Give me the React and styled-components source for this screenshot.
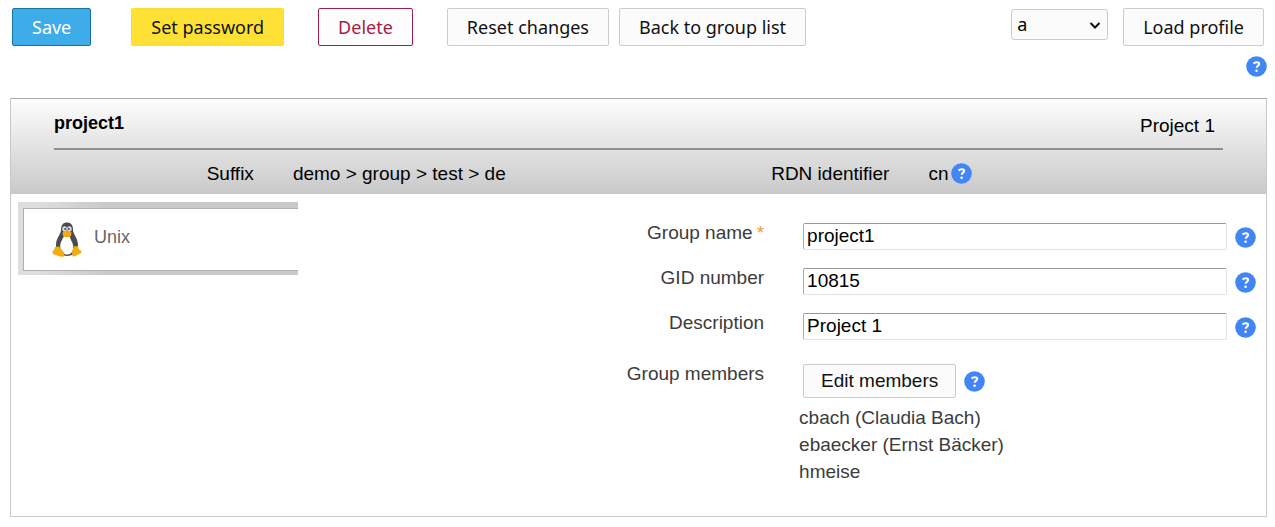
import React, {useState} from 'react'
import styled, {createGlobalStyle} from 'styled-components'

const GlobalStyle = createGlobalStyle`
  * {
    box-sizing: border-box;
  }

  body {
    margin: 0;
    background-color: #fff;
    color: #000;
    font-family: "Liberation Sans", Arial, sans-serif;
    font-size: 19px;
    line-height: 27px;
  }
`;

const Page = styled.main`
  padding: 8px 8px 10px 10px;
`;

const Toolbar = styled.div`
  display: flex;
  align-items: flex-start;
  padding: 0 3px 0 2px;
`;

const ButtonGroup = styled.div`
  display: flex;
  gap: 10px;
  margin-right: ${(props) => props.$gap || 0};
`;

const ProfileForm = styled.form`
  display: flex;
  align-items: flex-start;
  gap: 15px;
  margin-left: auto;
`;

const variants = {
  plain: {background: '#fbfbfb', border: '#ccc', color: '#111'},
  save: {background: '#3facea', border: '#16739f', color: '#fff'},
  password: {background: '#ffe135', border: '#fbdd31', color: '#111'},
  remove: {background: '#fcfcfc', border: '#9d2142', color: '#a81c43'},
};

const Button = styled.button`
  height: ${(props) => (props.$small ? '34px' : '38px')};
  padding: 0 ${(props) => (props.$small ? '17px' : '19px')};
  border: 1px solid ${(props) => variants[props.$variant || 'plain'].border};
  border-radius: 2px;
  background-color: ${(props) => variants[props.$variant || 'plain'].background};
  color: ${(props) => variants[props.$variant || 'plain'].color};
  font-family: ${(props) => (props.$small ? 'inherit' : '"Noto Sans", sans-serif')};
  font-size: ${(props) => (props.$small ? '19px' : '18px')};
  white-space: nowrap;
  cursor: pointer;
`;

const SelectWrapper = styled.div`
  position: relative;
  margin-top: 1px;

  svg {
    position: absolute;
    top: 12px;
    right: 7px;
    pointer-events: none;
  }
`;

const ProfileSelect = styled.select`
  display: block;
  width: 97px;
  height: 31px;
  padding: 0 5px 1px;
  appearance: none;
  border: 1px solid #ccc;
  border-radius: 3px;
  background-color: #fbfbfb;
  color: #000;
  font-family: "Noto Sans", sans-serif;
  font-size: 18px;
`;

const HelpRow = styled.div`
  display: flex;
  justify-content: flex-end;
  padding: 10px 0 21px;
`;

const HelpButton = styled.button`
  display: block;
  flex: none;
  width: 21px;
  height: 21px;
  padding: 0;
  border: none;
  background: none;
  cursor: pointer;

  svg {
    display: block;
  }
`;

const Panel = styled.section`
  border: 1px solid #c8c8c8;
  border-top-color: #aaa;
`;

const PanelHeader = styled.header`
  padding: 11px 43px 7px;
  background: linear-gradient(#fdfdfd, #c9c9c9);
`;

const TitleRow = styled.div`
  display: flex;
  justify-content: space-between;
  padding: 0 8px 11px 0;
  border-bottom: 2px solid #8f8f8f;
`;

const Title = styled.h1`
  margin: 0;
  font-size: 18px;
  line-height: 27px;
`;

const Subtitle = styled.span`
  padding-top: 4px;
  line-height: 23px;
`;

const HeaderDetails = styled.dl`
  display: grid;
  grid-template-columns: 19fr 25fr 28fr 28fr;
  column-gap: 39px;
  margin: 0;
  padding-top: 10px;

  dt {
    text-align: right;
  }

  dd {
    display: flex;
    align-items: center;
    gap: 2px;
    margin: 0;
    white-space: nowrap;
  }
`;

const PanelBody = styled.div`
  display: flex;
  align-items: flex-start;
  padding: 8px 10px 31px 7px;
`;

const Tabs = styled.nav`
  flex: none;
  width: 280px;
  padding: 6px 0 4px 5px;
  background: linear-gradient(90deg, #dedede 20px, #c9c9c9 90px);
`;

const Tab = styled.a`
  display: flex;
  align-items: center;
  gap: 12px;
  height: 63px;
  padding-left: 28px;
  border: 1px solid #b0b0b0;
  border-right: none;
  background-color: #fff;
  color: #666;
  font-size: 18px;
  text-decoration: none;

  span {
    padding-bottom: 4px;
  }
`;

const Form = styled.form`
  display: grid;
  flex: 1;
  grid-template-columns: 51fr 50fr;
  column-gap: 35px;
  padding-top: 17px;
  color: #3c3c3c;
`;

const Label = styled.label`
  height: 45px;
  text-align: right;
`;

const Required = styled.span`
  margin-left: 4px;
  color: #f09a3c;
`;

const Field = styled.div`
  display: flex;
  align-items: center;
  gap: 8px;
  height: 34px;
  padding-left: 4px;

  input + ${HelpButton} {
    margin-top: 2px;
  }
`;

const TextInput = styled.input`
  flex: 1;
  min-width: 0;
  height: 27px;
  padding: 0 3px;
  border: 1px solid #e3e3e3;
  border-top-color: #999;
  border-left-color: #aaa;
  border-radius: 2px;
  background-color: #fff;
  color: #000;
  font-family: inherit;
  font-size: 19px;
`;

const MembersLabel = styled.div`
  padding-top: 6px;
  text-align: right;
`;

const Members = styled.div`
  padding-top: 10px;
`;

const MemberList = styled.ul`
  margin: 0;
  padding: 6px 0 0;
  list-style: none;
`;

const Help = ({topic}) => (
  <HelpButton type="button" aria-label={`Help: ${topic}`}>
    <svg width="21" height="21" viewBox="0 0 21 21">
      <circle cx="10.5" cy="10.5" r="10.3" fill="#4285f4"/>
      <path d="M7.5 7.5C8.5 6.5 9.6 6.2 10.7 6.2c1.5 0 2.5.7 2.5 1.8 0 1.6-2.5 1.7-2.5 3.7" fill="none" stroke="#fff" strokeWidth="2"/>
      <circle cx="10.6" cy="14.7" r="1.3" fill="#fff"/>
    </svg>
  </HelpButton>
);

const Tux = () => (
  <svg width="30" height="35" viewBox="0 0 30 35" aria-hidden="true">
    <path d="M9 8C9 3 11 .5 15 .5S21 3 21 8c0 4 5 8 5 15 0 7-5 11-11 11S4 30 4 23C4 16 9 12 9 8z" fill="#4b4c50"/>
    <path d="M15 13c-3 0-4 3-5.5 6S8 24 8.500 27c1 4 3.500 5.500 6.500 5.500s5.500-1.500 6-5.500c.5-3 0-5-1.500-8S18 13 15 13z" fill="#fff"/>
    <ellipse cx="12.600" cy="7" rx="2.300" ry="2.700" fill="#ddd"/>
    <ellipse cx="17.400" cy="7" rx="2.300" ry="2.700" fill="#ddd"/>
    <circle cx="13.200" cy="7" r="1" fill="#444"/>
    <circle cx="16.800" cy="7" r="1" fill="#444"/>
    <path d="M10.500 10.500Q15 7 19.500 10.500L19 14q-4 2.500-8 0z" fill="#f4a911"/>
    <path d="M3 25l4-.5 5.500 6.500-.5 3.500-3 .3L.800 32 .500 29l1.500-1z" fill="#f2ac0b"/>
    <path d="M22 24l4 .5 1 3 2.500 1.500-.5 2-6.500 3.500-2-.3-.500-4z" fill="#f2ac0b"/>
  </svg>
);

const fields = [
  {name: 'groupName', label: 'Group name', required: true},
  {name: 'gidNumber', label: 'GID number'},
  {name: 'description', label: 'Description'},
];

const members = ['cbach (Claudia Bach)', 'ebaecker (Ernst Bäcker)', 'hmeise'];

export const App = () => {

    const [group, setGroup] = useState({
        groupName: "project1",
        gidNumber: "10815",
        description: "Project 1",
    });

  return (
    <Page>
      <GlobalStyle/>
      <Toolbar>
        <ButtonGroup $gap="40px">
          <Button type="button" $variant="save">Save</Button>
        </ButtonGroup>
        <ButtonGroup $gap="34px">
          <Button type="button" $variant="password">Set password</Button>
        </ButtonGroup>
        <ButtonGroup $gap="34px">
          <Button type="button" $variant="remove">Delete</Button>
        </ButtonGroup>
        <ButtonGroup>
          <Button type="button">Reset changes</Button>
          <Button type="button">Back to group list</Button>
        </ButtonGroup>
        <ProfileForm onSubmit={(e) => e.preventDefault()}>
          <SelectWrapper>
            <ProfileSelect aria-label="Profile" defaultValue="a">
              <option value="a">a</option>
            </ProfileSelect>
            <svg width="12" height="9" viewBox="0 0 12 9">
              <path d="M1.500 2l4.500 4.500L10.500 2" fill="none" stroke="#111" strokeWidth="2"/>
            </svg>
          </SelectWrapper>
          <Button type="submit">Load profile</Button>
        </ProfileForm>
      </Toolbar>
      <HelpRow>
        <Help topic="profiles"/>
      </HelpRow>
      <Panel>
        <PanelHeader>
          <TitleRow>
            <Title>project1</Title>
            <Subtitle>Project 1</Subtitle>
          </TitleRow>
          <HeaderDetails>
            <dt>Suffix</dt>
            <dd>demo &gt; group &gt; test &gt; de</dd>
            <dt>RDN identifier</dt>
            <dd>cn<Help topic="RDN identifier"/></dd>
          </HeaderDetails>
        </PanelHeader>
        <PanelBody>
          <Tabs>
            <Tab href="#unix">
              <Tux/>
              <span>Unix</span>
            </Tab>
          </Tabs>
          <Form onSubmit={(e) => e.preventDefault()}>
            {fields.map(({name, label, required}) => (
              <React.Fragment key={name}>
                <Label htmlFor={name}>
                  {label}{required && <Required>*</Required>}
                </Label>
                <Field>
                  <TextInput id={name} type="text" value={group[name]} onChange={(e) => setGroup({...group, [name]: e.target.value})}/>
                  <Help topic={label}/>
                </Field>
              </React.Fragment>
            ))}
            <MembersLabel>Group members</MembersLabel>
            <Members>
              <Field>
                <Button type="button" $small>Edit members</Button>
                <Help topic="Group members"/>
              </Field>
              <MemberList>
                {members.map((member) => <li key={member}>{member}</li>)}
              </MemberList>
            </Members>
          </Form>
        </PanelBody>
      </Panel>
    </Page>
  )
}

export default App;
